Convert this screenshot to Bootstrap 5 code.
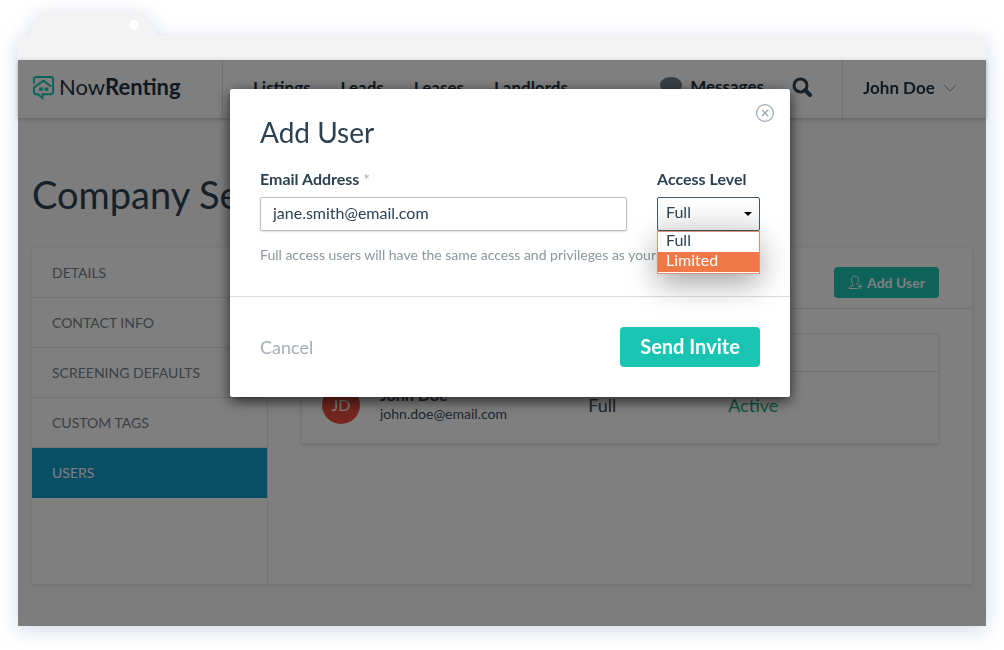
<!DOCTYPE html>
<html lang="en">
<head>
<meta charset="utf-8">
<meta name="viewport" content="width=device-width, initial-scale=1">
<title>NowRenting</title>
<link href="https://cdn.jsdelivr.net/npm/bootstrap@5.3.0/dist/css/bootstrap.min.css" rel="stylesheet">
<style>
body{font-family:"Lato","Open Sans",sans-serif;color:#2c4252;background:#fff;font-size:16px;line-height:24px}
.browser{margin:12px 18px 24px;filter:drop-shadow(0 4px 10px rgba(90,120,170,.28))}
.browser-tab{margin-left:10px;width:129px;height:24px;background:#f3f3f3;clip-path:polygon(10% 0,89% 0,100% 100%,0 100%);padding:8px 18px}
.tab-dot{width:10px;height:10px;background:#fff}
.browser-bar{height:24px;background:#f3f3f3;border-radius:4px 4px 0 0}
.app{background:#fafafa;min-height:566px}
.topbar{height:58px;background:#fff;box-shadow:0 1px 4px rgba(0,0,0,.25);padding-bottom:2px}
.topbar>*{margin-bottom:-2px;padding-bottom:2px}
.brand{width:205px;padding-left:14px;padding-bottom:4px;border-right:1px solid #e0e0e0;color:#1f3342;font-size:22px}
.brand:hover{color:#1f3342}
.topbar .nav-link{color:#1f3342;font-size:17px;font-weight:700;padding-top:0;padding-left:0;padding-right:0}
.main-links .nav-link{padding-bottom:0}
.main-links{padding-left:30px;gap:30px}
.tools{margin-right:30px;padding-bottom:4px}
.tools .nav-link{padding-bottom:0}
.topbar .account{width:144px;padding-left:20px;border-left:1px solid #e0e0e0}
.page{padding:52px 14px 42px}
.page-title{font-size:38px;line-height:48px;margin:0 0 30px;font-weight:400}
.panel{background:#fff;min-height:336px;box-shadow:0 1px 4px rgba(0,0,0,.12)}
.sidebar{width:236px;border-right:1px solid #e4e4e4}
.sidebar a{height:50px;padding:0 20px;font-size:14px;color:#74818c;text-decoration:none;border-bottom:1px solid #e4e4e4}
.sidebar a.current{background:#109cc8;color:#fff;border-color:#109cc8}
.panel-head{height:61px;padding-right:33px;border-bottom:1px solid #e0e0e0}
.btn-brand,.btn-brand:hover{background:#1ac4b2;color:#fff;border:0;border-radius:4px;font-weight:700}
.btn-add{height:31px;width:105px;padding:0;font-size:14px}
.users{margin:25px 33px 0;box-shadow:0 1px 4px rgba(0,0,0,.12);border:1px solid #ececec}
.users table{table-layout:fixed;margin:0}
.users th{height:36px;padding:0;border-bottom:1px solid #e0e0e0}
.users td{height:72px;padding:0 0 4px;border:0;font-size:18px;vertical-align:middle;color:#3a4d5c}
.users td.status{color:#1aa88a}
.avatar{width:38px;height:38px;background:#e74c3c;color:#fff;font-size:16px;margin-left:20px}
.person{font-size:16px;line-height:18px;font-weight:700}
.person-mail{font-size:14px;line-height:20px}
.shade{background:rgba(0,0,0,.5);padding:29px 0 0 16px}
.dialog{width:560px;max-width:100%;background:#fff;border-radius:2px;box-shadow:0 4px 14px rgba(0,0,0,.7)}
.dialog-main{padding:27px 30px 30px;border-bottom:1px solid #dcdcdc}
.dialog h2{font-size:28px;line-height:32px;margin:0 0 19px}
.dialog label{font-size:16px;line-height:24px;font-weight:700}
.required{color:#a4aeb5}
.fields{gap:30px}
.access{width:103px}
.dialog .form-control,.dialog .form-select{height:34px;border-radius:2px;font-size:16px;line-height:20px;color:#2c4252;margin-top:6px}
.dialog .form-control{padding:4px 12px 8px;border-color:#b4bfc7;box-shadow:0 1px 2px rgba(0,0,0,.12)}
.dialog .form-select{padding:4px 8px 8px;border-color:#41586a;background-image:url("data:image/svg+xml,%3Csvg xmlns='http://www.w3.org/2000/svg' viewBox='0 0 8 4'%3E%3Cpath d='M0 0h8L4 4z'/%3E%3C/svg%3E"),linear-gradient(#fff,#f0f0f0);background-size:8px 4px,100% 100%;background-position:right 7px center,0 0}
.options{top:100%;left:0;right:0;height:43px;background:#fff;border:1px solid #dd9070;box-shadow:0 10px 30px rgba(0,0,0,.35);z-index:2}
.options button{height:20px;padding:0 8px 5px;border:0;background:#fff;color:#2c4252;font-size:16px;line-height:15px;text-align:left}
.options button.picked{background:#f07847;color:#fff}
.hint{font-size:14px;line-height:20px;margin:14px 0 1px;color:#8b969e}
.dialog-foot{padding:30px}
.btn-cancel,.btn-cancel:hover{padding:0;border:0;font-size:18px;color:#a4aeb5}
.btn-send{width:140px;height:40px;padding:0 0 2px;font-size:20px}
.btn-x{top:15px;right:16px;line-height:0}
</style>
</head>
<body>
<div class="browser">
  <div class="browser-tab d-flex justify-content-end"><span class="tab-dot rounded-circle"></span></div>
  <div class="browser-bar"></div>
  <div class="app position-relative">
    <header class="topbar d-flex">
      <a class="brand d-flex align-items-center text-decoration-none" href="#">
        <svg class="me-1" width="23" height="25" viewBox="0 0 24 26" fill="none" stroke="#1ac4b2" stroke-width="2"><path d="M2 9V4.500Q2 2 4.500 2h15Q22 2 22 4.500v13Q22 20 19.500 20H11v4l-5-4H4.500Q2 20 2 17.500V13l10-7 8 6"/><path d="M7.500 13h4v3.500h-4zM13 13h4v3.500h-4z" fill="#1ac4b2" stroke="none"/></svg>
        <span>Now<b>Renting</b></span>
      </a>
      <nav class="main-links nav align-items-center">
        <a class="nav-link" href="#">Listings</a><a class="nav-link" href="#">Leads</a><a class="nav-link" href="#">Leases</a><a class="nav-link" href="#">Landlords</a>
      </nav>
      <div class="tools d-flex align-items-center ms-auto">
        <a class="nav-link d-flex align-items-center gap-2" href="#"><svg width="22" height="20" viewBox="0 0 22 20"><path d="M11 0C5 0 0 3.500 0 8c0 3 2 5.500 5 7l-1 4 6-3h1c6 0 11-3.500 11-8S17 0 11 0z" fill="#72808b"/></svg>Messages</a>
        <a href="#" class="ms-4 ps-1 d-flex" aria-label="Search"><svg width="20" height="20" viewBox="0 0 20 20" fill="none" stroke="#2c4252" stroke-width="3"><circle cx="8.500" cy="8.500" r="6.500"/><path d="M13 13l5 5" stroke-width="4" stroke-linecap="round"/></svg></a>
      </div>
      <a class="account nav-link d-flex align-items-center gap-2" href="#">John Doe<svg width="14" height="9" viewBox="0 0 14 9" fill="none" stroke="#8b969e"><path d="M1 1l6 6 6-6"/></svg></a>
    </header>
    <main class="page">
      <h1 class="page-title">Company Settings</h1>
      <div class="panel d-flex">
        <nav class="sidebar flex-shrink-0">
          <a class="d-flex align-items-center" href="#">DETAILS</a>
          <a class="d-flex align-items-center" href="#">CONTACT INFO</a>
          <a class="d-flex align-items-center" href="#">SCREENING DEFAULTS</a>
          <a class="d-flex align-items-center" href="#">CUSTOM TAGS</a>
          <a class="current d-flex align-items-center" href="#">USERS</a>
        </nav>
        <section class="flex-grow-1">
          <div class="panel-head d-flex align-items-center justify-content-end pt-2">
            <button type="button" class="btn btn-brand btn-add d-flex align-items-center justify-content-center gap-1"><svg width="15" height="15" viewBox="0 0 15 15" fill="none" stroke="#fff"><path d="M10 13.500H1c0-2 1-2 4-3V9C2.500 6 3 1 7 1s4.500 5 2 8v1M12 9v5M9.500 11.500h5"/></svg>Add User</button>
          </div>
          <div class="users">
            <table class="w-100">
              <colgroup><col><col style="width:22%"><col style="width:33%"></colgroup>
              <thead><tr><th></th><th></th><th></th></tr></thead>
              <tbody><tr>
                <td><div class="d-flex align-items-center"><span class="avatar rounded-circle d-flex align-items-center justify-content-center">JD</span><div class="ms-3 ps-1"><div class="person">John Doe</div><div class="person-mail">john.doe@email.com</div></div></div></td>
                <td>Full</td>
                <td class="status">Active</td>
              </tr></tbody>
            </table>
          </div>
        </section>
      </div>
    </main>
    <div class="shade position-absolute top-0 start-0 w-100 h-100 d-flex justify-content-center align-items-start">
      <form class="dialog position-relative" role="dialog" aria-labelledby="dialog-title">
        <button type="button" class="btn-x btn p-0 border-0 position-absolute" aria-label="Close"><svg width="18" height="18" viewBox="0 0 18 18" fill="none" stroke="#9ba7b0"><circle cx="9" cy="9" r="8.400" stroke-width="1.200"/><path d="M6 6l6 6M12 6l-6 6" stroke-width="1.300"/></svg></button>
        <div class="dialog-main">
          <h2 id="dialog-title" class="fw-normal">Add User</h2>
          <div class="fields d-flex">
            <div class="flex-grow-1">
              <label for="email" class="d-block">Email Address <span class="required fw-normal">*</span></label>
              <input id="email" class="form-control" type="email" value="jane.smith@email.com">
            </div>
            <div class="access position-relative">
              <label for="access" class="d-block text-nowrap">Access Level</label>
              <select id="access" class="form-select"><option>Full</option><option>Limited</option></select>
              <div class="options position-absolute d-flex flex-column">
                <button type="button">Full</button><button type="button" class="picked">Limited</button>
              </div>
            </div>
          </div>
          <p class="hint">Full access users will have the same access and privileges as yours</p>
        </div>
        <div class="dialog-foot d-flex align-items-center justify-content-between">
          <button type="button" class="btn btn-cancel">Cancel</button>
          <button type="submit" class="btn btn-brand btn-send">Send Invite</button>
        </div>
      </form>
    </div>
  </div>
</div>
<script src="https://cdn.jsdelivr.net/npm/bootstrap@5.3.0/dist/js/bootstrap.bundle.min.js"></script>
</body>
</html>
